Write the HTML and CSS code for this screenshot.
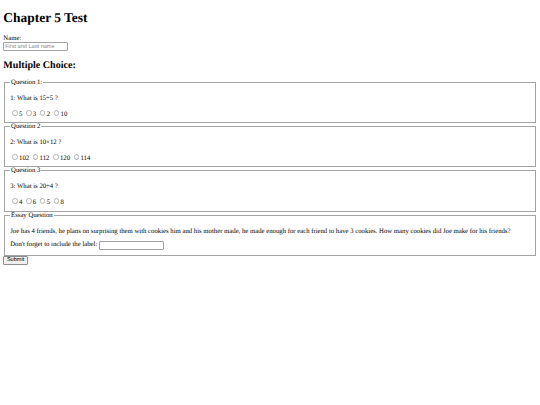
FILE: index.html
```html
<!DOCTYPE html>
<html>
<head>
<meta charset="utf-8">
<title>Chapter 5 Test</title>
<link rel="stylesheet" href="styles.css">
</head>
<body>
<h1 class="title">Chapter 5 Test</h1>
<form class="test-form">
<label class="name-label" for="name">Name:</label><br>
<input id="name" class="text-input" type="text" placeholder="First and Last name">
<h2 class="section-title">Multiple Choice:</h2>
<fieldset class="question">
<legend class="question-legend">Question 1:</legend>
<p class="question-text">1: What is 15÷5 ?</p>
<input class="radio" type="radio" name="q1" id="q1a"><label for="q1a">5</label>
<input class="radio" type="radio" name="q1" id="q1b"><label for="q1b">3</label>
<input class="radio" type="radio" name="q1" id="q1c"><label for="q1c">2</label>
<input class="radio" type="radio" name="q1" id="q1d"><label for="q1d">10</label>
</fieldset>
<fieldset class="question">
<legend class="question-legend">Question 2</legend>
<p class="question-text">2: What is 10×12 ?</p>
<input class="radio" type="radio" name="q2" id="q2a"><label for="q2a">102</label>
<input class="radio" type="radio" name="q2" id="q2b"><label for="q2b">112</label>
<input class="radio" type="radio" name="q2" id="q2c"><label for="q2c">120</label>
<input class="radio" type="radio" name="q2" id="q2d"><label for="q2d">114</label>
</fieldset>
<fieldset class="question">
<legend class="question-legend">Question 3</legend>
<p class="question-text">3: What is 20÷4 ?</p>
<input class="radio" type="radio" name="q3" id="q3a"><label for="q3a">4</label>
<input class="radio" type="radio" name="q3" id="q3b"><label for="q3b">6</label>
<input class="radio" type="radio" name="q3" id="q3c"><label for="q3c">5</label>
<input class="radio" type="radio" name="q3" id="q3d"><label for="q3d">8</label>
</fieldset>
<fieldset class="question">
<legend class="question-legend">Essay Question</legend>
<p class="question-text">Joe has 4 friends, he plans on surprising them with cookies him and his mother made, he made enough for each friend to have 3 cookies. How many cookies did Joe make for his friends?</p>
<label for="essay">Don't forget to include the label:</label> <input id="essay" class="text-input" type="text">
</fieldset>
<input class="submit" type="submit" value="Submit">
</form>
</body>
</html>
```
FILE: styles.css
```css
body {
  margin: 3.36px;
  font-family: "Liberation Serif", "Times New Roman", serif;
  font-size: 6.72px;
  color: #000;
  background: #fff;
  text-rendering: geometricPrecision;
}
.title {
  font-size: 13.44px;
  font-weight: bold;
  margin: 7px 0 9px;
}
.section-title {
  font-size: 10.08px;
  font-weight: bold;
  margin: 8.37px 0;
}
.text-input {
  box-sizing: border-box;
  width: 65px;
  height: 8.95px;
  padding: 0.42px 0.84px;
  margin: 0;
  border: 1px solid #a2a2a2;
  border-radius: 1px;
  font-family: "Liberation Sans", Arial, sans-serif;
  font-size: 5.6px;
  background: #fff;
  text-rendering: geometricPrecision;
}
.text-input::placeholder {
  color: #8a8a8a;
}
.question {
  margin: 0 0.84px;
  padding: 2.35px 5.04px 4.7px;
  border: 1px solid #a4a4a4;
  min-width: 0;
}
.question-legend {
  padding: 0 0.84px;
}
.question-text {
  margin: 6.72px 0;
  white-space: nowrap;
}
.radio {
  appearance: none;
  -webkit-appearance: none;
  box-sizing: border-box;
  width: 5.46px;
  height: 5.46px;
  margin: 1.26px 1.26px 0 2.1px;
  border: 1px solid #b4b4b4;
  border-radius: 50%;
  background: #fff;
}
.submit {
  box-sizing: border-box;
  margin: 0;
  padding: 0.42px 2.52px;
  height: 8.95px;
  font-family: "Liberation Sans", Arial, sans-serif;
  font-size: 5.6px;
  color: #000;
  background: #efefef;
  border: 1px solid #8f8f8f;
  border-radius: 1px;
  line-height: 1;
  text-rendering: geometricPrecision;
}
```
